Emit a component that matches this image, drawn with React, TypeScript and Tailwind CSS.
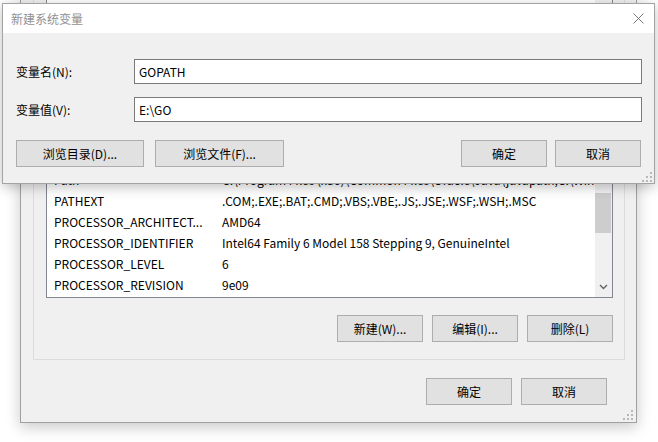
import React from "react";

const font = { fontFamily: '"Noto Sans CJK SC", "Noto Sans", sans-serif' };

const rows: [string, string][] = [
  ["Path", "C:\\Program Files (x86)\\Common Files\\Oracle\\Java\\javapath;C:\\Windows\\system32;C:\\Windows;"],
  ["PATHEXT", ".COM;.EXE;.BAT;.CMD;.VBS;.VBE;.JS;.JSE;.WSF;.WSH;.MSC"],
  ["PROCESSOR_ARCHITECT...", "AMD64"],
  ["PROCESSOR_IDENTIFIER", "Intel64 Family 6 Model 158 Stepping 9, GenuineIntel"],
  ["PROCESSOR_LEVEL", "6"],
  ["PROCESSOR_REVISION", "9e09"],
];

const WinButton = ({ label, className = "" }: { label: string; className?: string }) => (
  <button
    className={`h-[27px] border border-[#adadad] bg-[#e1e1e1] text-[12px] text-black flex items-center justify-center ${className}`}
  >
    {label}
  </button>
);

const Grip = () => (
  <svg width="10" height="10" viewBox="0 0 10 10" className="block">
    {[
      [8, 0],
      [4, 4],
      [8, 4],
      [0, 8],
      [4, 8],
      [8, 8],
    ].map(([x, y]) => (
      <rect key={`${x}-${y}`} x={x} y={y} width="2" height="2" fill="#b8b8b8" />
    ))}
  </svg>
);

const EnvWindow = () => (
  <div className="absolute left-[20px] top-0 w-[617px] h-[423px] bg-[#f0f0f0] border-x border-b border-[#a0a0a0] shadow-[0_4px_14px_rgba(0,0,0,0.22)] flex flex-col">
    <div className="ml-[12px] w-[592px] h-[360px] border-x border-b border-[#dcdcdc] flex flex-col">
      <div className="relative ml-[12px] w-[567px] h-[298px] bg-white border-x border-b border-[#828790] overflow-hidden flex flex-col justify-end pb-[2px]">
        {rows.map(([name, value]) => (
          <div key={name} className="h-[21px] shrink-0 flex items-center pl-[7px] text-[12px] text-black whitespace-nowrap">
            <span className="w-[168px] shrink-0">{name}</span>
            <span>{value}</span>
          </div>
        ))}
        <div className="absolute right-0 top-0 bottom-0 w-[17px] bg-[#f0f0f0]">
          <div className="absolute left-0 right-[1px] top-[193px] h-[40px] bg-[#cdcdcd]" />
          <svg width="9" height="6" viewBox="0 0 9 6" className="absolute left-[4px] top-[284px]">
            <path d="M1 1 L4.5 4.5 L8 1" stroke="#606060" strokeWidth="1.3" fill="none" />
          </svg>
        </div>
      </div>
      <div className="mt-[17px] flex justify-end gap-[9px] pr-[11px]">
        <WinButton label="新建(W)..." className="w-[86px]" />
        <WinButton label="编辑(I)..." className="w-[86px]" />
        <WinButton label="删除(L)" className="w-[86px]" />
      </div>
    </div>
    <div className="relative flex-1 flex items-start justify-end gap-[9px] pt-[18px] pr-[29px]">
      <WinButton label="确定" className="w-[86px]" />
      <WinButton label="取消" className="w-[86px]" />
      <div className="absolute right-[3px] bottom-[2px]">
        <Grip />
      </div>
    </div>
  </div>
);

const NewVarDialog = () => (
  <div className="absolute left-[2px] top-[3px] w-[653px] h-[181px] bg-[#f0f0f0] border border-[#a3a3a3] shadow-[0_3px_12px_rgba(0,0,0,0.25)] flex flex-col">
    <div className="h-[29px] bg-white flex items-center pl-[8px] pr-[10px]">
      <span className="text-[12px] text-[#909090]">新建系统变量</span>
      <svg width="11" height="11" viewBox="0 0 11 11" className="ml-auto">
        <path d="M0.5 0.5 L10.5 10.5 M10.5 0.5 L0.5 10.5" stroke="#777" strokeWidth="1" />
      </svg>
    </div>
    <div className="relative flex-1 pt-[26px] pl-[13px] pr-[12px]">
      <div className="flex items-center h-[25px]">
        <span className="w-[118px] text-[12px] text-black">变量名(N):</span>
        <div className="flex-1 h-[25px] bg-white border border-[#7a7a7a] flex items-center pl-[4px] text-[12px] text-black">
          GOPATH
        </div>
      </div>
      <div className="flex items-center h-[25px] mt-[13px]">
        <span className="w-[118px] text-[12px] text-black">变量值(V):</span>
        <div className="flex-1 h-[25px] bg-white border border-[#7a7a7a] flex items-center pl-[4px] text-[12px] text-black">
          E:\GO
        </div>
      </div>
      <div className="flex mt-[18px] pr-[1px]">
        <WinButton label="浏览目录(D)..." className="w-[128px]" />
        <WinButton label="浏览文件(F)..." className="w-[129px] ml-[11px]" />
        <WinButton label="确定" className="w-[86px] ml-auto" />
        <WinButton label="取消" className="w-[86px] ml-[8px]" />
      </div>
      <div className="absolute right-[2px] bottom-[1px]">
        <Grip />
      </div>
    </div>
  </div>
);

export default function App() {
  return (
    <div className="relative w-[658px] h-[442px] bg-white overflow-hidden" style={font}>
      <EnvWindow />
      <NewVarDialog />
    </div>
  );
}
